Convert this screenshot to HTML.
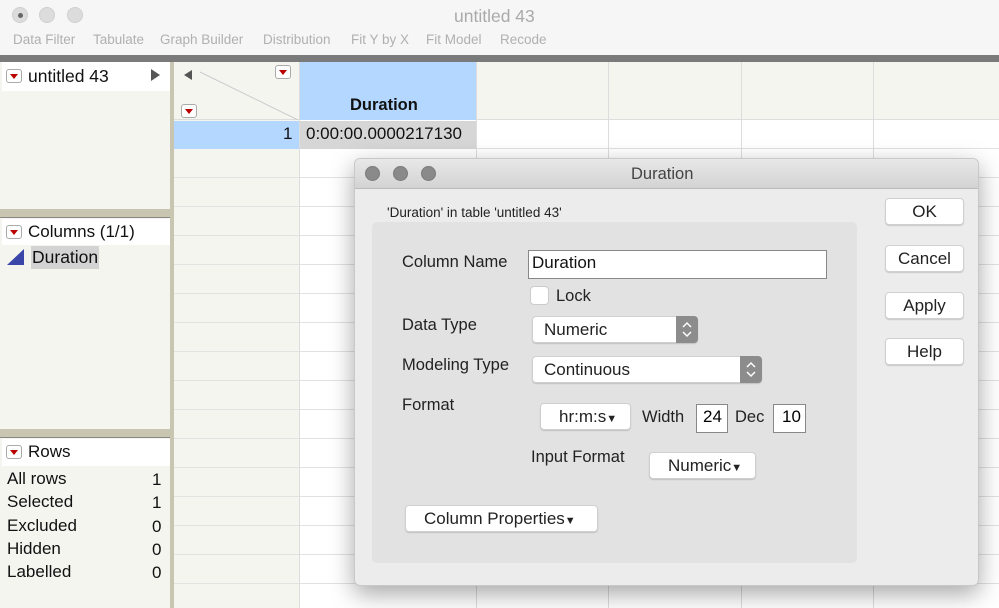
<!DOCTYPE html>
<html><head><style>
*{box-sizing:border-box;margin:0;padding:0}
body{width:999px;height:608px;overflow:hidden;background:#f4f4f4;font-family:"Liberation Sans",sans-serif;position:relative}
.a{position:absolute}
.dot{position:absolute;width:16px;height:16px;border-radius:50%;background:#dcdcdc;border:1px solid #cfcfcf}
.tb{color:#b0b0b0;font-size:13.5px;top:32px}
.menu{position:absolute;width:16px;height:14px;border:1px solid #aaa;border-radius:3px;background:#fff}
.menu:after{content:"";position:absolute;left:3px;top:4px;border-left:4px solid transparent;border-right:4px solid transparent;border-top:5px solid #b00}
.t{font-size:16.5px;color:#111}
.btn{position:absolute;background:#fff;border:1px solid #d0d0d0;border-radius:4px;box-shadow:0 1px 1px rgba(0,0,0,.15);font-size:17px;color:#222;text-align:center}
.lbl{position:absolute;font-size:16.5px;color:#222}
.step{position:absolute;width:22px;height:27px;background:#8c8c8c;border-radius:0 4px 4px 0}
</style></head><body>
<div class="a" style="left:0;top:0;width:999px;height:56px;background:#f6f6f6"></div>
<div class="dot" style="left:12px;top:7px"></div><div class="a" style="left:18px;top:13px;width:5px;height:5px;border-radius:50%;background:#666"></div>
<div class="dot" style="left:39px;top:7px"></div><div class="dot" style="left:67px;top:7px"></div>
<div class="a" style="left:454px;top:6px;font-size:17.5px;color:#aaa">untitled 43</div>
<div class="a tb" style="left:13px">Data Filter</div><div class="a tb" style="left:93px">Tabulate</div><div class="a tb" style="left:160px">Graph Builder</div><div class="a tb" style="left:263px">Distribution</div><div class="a tb" style="left:351px">Fit Y by X</div><div class="a tb" style="left:426px">Fit Model</div><div class="a tb" style="left:500px">Recode</div>
<div class="a" style="left:0;top:55px;width:999px;height:7px;background:#7a7a7a"></div>
<div class="a" style="left:0;top:62px;width:170px;height:546px;background:#f5f5f0"></div>
<div class="a" style="left:170px;top:62px;width:4px;height:546px;background:#c8c6b0"></div>
<div class="a" style="left:2px;top:62px;width:168px;height:29px;background:#fff"></div>
<div class="menu" style="left:6px;top:69px"></div><div class="a t" style="left:28px;top:66px;font-size:17.5px">untitled 43</div>
<div class="a" style="left:151px;top:69px;border-top:6px solid transparent;border-bottom:6px solid transparent;border-left:9px solid #555"></div>
<div class="a" style="left:0;top:209px;width:170px;height:9px;background:#c8c6b0;border-bottom:1px solid #888"></div>
<div class="a" style="left:2px;top:219px;width:168px;height:26px;background:#fff"></div>
<div class="menu" style="left:6px;top:225px"></div><div class="a t" style="left:28px;top:222px;font-size:17px">Columns (1/1)</div>
<div class="a" style="left:7px;top:249px;border-left:17px solid transparent;border-bottom:16px solid #3a47a8"></div>
<div class="a t" style="left:31px;top:246px;background:#d3d3d3;padding:1px 1px;font-size:17.5px">Duration</div>
<div class="a" style="left:0;top:429px;width:170px;height:9px;background:#c8c6b0;border-bottom:1px solid #888"></div>
<div class="a" style="left:2px;top:439px;width:168px;height:27px;background:#fff"></div>
<div class="menu" style="left:6px;top:445px"></div><div class="a t" style="left:28px;top:442px;font-size:17px">Rows</div>
<div class="a t" style="left:7px;top:467px;line-height:23.3px;font-size:17px">All rows<br>Selected<br>Excluded<br>Hidden<br>Labelled</div>
<div class="a t" style="left:152px;top:468px;line-height:23.3px;text-align:right;font-size:17px">1<br>1<br>0<br>0<br>0</div>
<div class="a" style="left:174px;top:62px;width:825px;height:546px;background:#fff;
background-image:repeating-linear-gradient(to bottom,transparent 0,transparent 28px,#e2e2e2 28px,#e2e2e2 29px);background-position:0 58px"></div>
<div class="a" style="left:174px;top:62px;width:125px;height:546px;background:#f5f5f0;background-image:repeating-linear-gradient(to bottom,transparent 0,transparent 28px,#e2e2e2 28px,#e2e2e2 29px);background-position:0 58px"></div>
<div class="a" style="left:174px;top:62px;width:825px;height:58px;background:#f5f5f0;border-bottom:1px solid #ddd"></div>
<div class="a" style="left:299px;top:62px;width:1px;height:546px;background:#ddd"></div>
<div class="a" style="left:476px;top:62px;width:1px;height:546px;background:#ddd"></div>
<div class="a" style="left:608px;top:62px;width:1px;height:546px;background:#ddd"></div>
<div class="a" style="left:741px;top:62px;width:1px;height:546px;background:#ddd"></div>
<div class="a" style="left:873px;top:62px;width:1px;height:546px;background:#ddd"></div>
<div class="a" style="left:300px;top:62px;width:176px;height:58px;background:#b3d7ff"></div>
<div class="a" style="left:350px;top:96px;font-weight:bold;font-size:16.5px;color:#111">Duration</div>
<svg class="a" style="left:174px;top:62px" width="125" height="58"><line x1="26" y1="10" x2="124" y2="58" stroke="#ccc"/><polygon points="10,13 18,8 18,18" fill="#555"/></svg>
<div class="menu" style="left:275px;top:65px"></div><div class="menu" style="left:181px;top:104px"></div>
<div class="a" style="left:174px;top:121px;width:125px;height:28px;background:#b3d7ff"></div>
<div class="a t" style="left:283px;top:124px;font-size:17px">1</div>
<div class="a" style="left:300px;top:121px;width:176px;height:28px;background:#d6d6d6"></div>
<div class="a t" style="left:306px;top:124px;font-size:17px">0:00:00.0000217130</div>
<!-- dialog -->
<div class="a" style="left:354px;top:158px;width:625px;height:428px;background:#ececec;border-radius:6px;box-shadow:0 8px 24px rgba(0,0,0,.35);border:1px solid #c8c8c8;overflow:hidden">
<div class="a" style="left:0;top:0;width:625px;height:30px;background:linear-gradient(#e8e8e8,#d3d3d3);border-bottom:1px solid #bbb"></div>
<div class="dot" style="left:10px;top:7px;width:15px;height:15px;background:#8a8a8a;border-color:#7a7a7a"></div>
<div class="dot" style="left:38px;top:7px;width:15px;height:15px;background:#8a8a8a;border-color:#7a7a7a"></div>
<div class="dot" style="left:66px;top:7px;width:15px;height:15px;background:#8a8a8a;border-color:#7a7a7a"></div>
<div class="a" style="left:276px;top:6px;font-size:16.5px;color:#444">Duration</div>
<div class="a" style="left:32px;top:46px;font-size:13.5px;color:#222">'Duration' in table 'untitled 43'</div>
<div class="a" style="left:17px;top:63px;width:485px;height:341px;background:#e2e2e2;border-radius:5px"></div>
</div>
<div class="lbl" style="left:402px;top:253px">Column Name</div>
<div class="a" style="left:528px;top:250px;width:299px;height:29px;background:#fff;border:1px solid #888;font-size:17px;color:#111;padding:2px 3px">Duration</div>
<div class="a" style="left:530px;top:286px;width:19px;height:19px;background:#fff;border:1px solid #ccc;border-radius:4px"></div>
<div class="lbl" style="left:556px;top:287px">Lock</div>
<div class="lbl" style="left:402px;top:316px">Data Type</div>
<div class="btn" style="left:532px;top:316px;width:166px;height:27px;text-align:left;padding:3px 11px">Numeric</div>
<div class="step" style="left:676px;top:316px"><svg width="22" height="27"><path d="M7 11 L11 7 L15 11 M7 16 L11 20 L15 16" stroke="#fff" stroke-width="1.5" fill="none"/></svg></div>
<div class="lbl" style="left:402px;top:356px">Modeling Type</div>
<div class="btn" style="left:532px;top:356px;width:230px;height:27px;text-align:left;padding:3px 11px">Continuous</div>
<div class="step" style="left:740px;top:356px"><svg width="22" height="27"><path d="M7 11 L11 7 L15 11 M7 16 L11 20 L15 16" stroke="#fff" stroke-width="1.5" fill="none"/></svg></div>
<div class="lbl" style="left:402px;top:396px">Format</div>
<div class="btn" style="left:540px;top:403px;width:91px;height:27px;padding:3px 0 0 18px;text-align:left">hr:m:s<span style="font-size:11px">▼</span></div>
<div class="lbl" style="left:642px;top:408px">Width</div>
<div class="a" style="left:696px;top:404px;width:32px;height:29px;background:#fff;border:1px solid #888;font-size:17px;padding:2px 6px">24</div>
<div class="lbl" style="left:735px;top:408px">Dec</div>
<div class="a" style="left:773px;top:404px;width:33px;height:29px;background:#fff;border:1px solid #888;font-size:17px;padding:2px 8px">10</div>
<div class="lbl" style="left:531px;top:448px">Input Format</div>
<div class="btn" style="left:649px;top:452px;width:107px;height:27px;padding:3px 0 0 18px;text-align:left">Numeric<span style="font-size:11px">▼</span></div>
<div class="btn" style="left:405px;top:505px;width:193px;height:27px;padding:3px 0 0 18px;text-align:left">Column Properties<span style="font-size:11px">▼</span></div>
<div class="btn" style="left:885px;top:198px;width:79px;height:27px;padding-top:3px">OK</div>
<div class="btn" style="left:885px;top:245px;width:79px;height:27px;padding-top:3px">Cancel</div>
<div class="btn" style="left:885px;top:292px;width:79px;height:27px;padding-top:3px">Apply</div>
<div class="btn" style="left:885px;top:338px;width:79px;height:27px;padding-top:3px">Help</div>
</body></html>
